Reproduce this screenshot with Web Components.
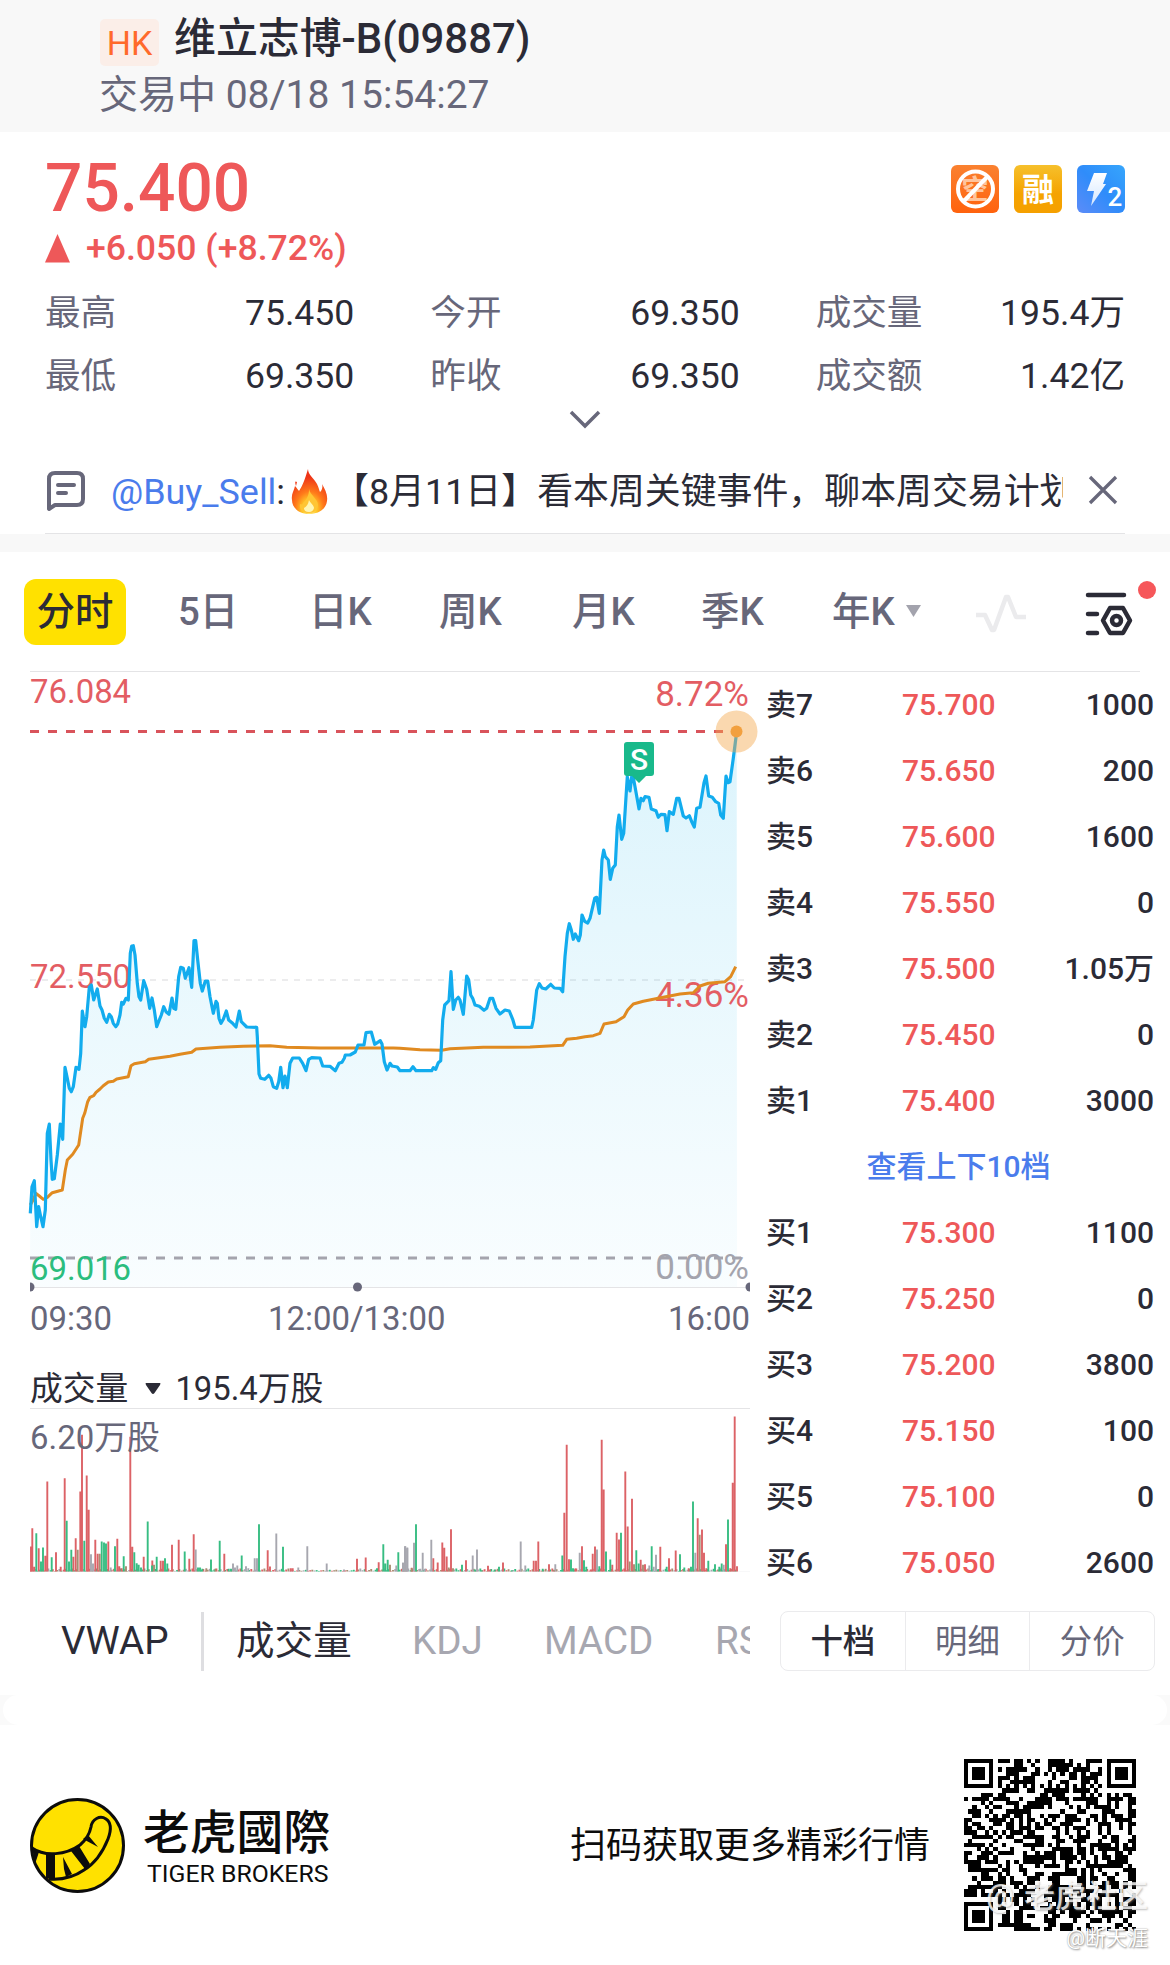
<!DOCTYPE html>
<html lang="zh-CN">
<head>
<meta charset="UTF-8">
<title>维立志博-B(09887)</title>
<style>
    body {
        margin: 0;
        width: 1170px;
        background: #fff;
        color: #2b2b36;
        font-family: Roboto, "Noto Sans CJK SC", sans-serif;
        --red: #ee5859;
        --grey: #67677a;
        --line: #e4e4e6;
        --band: #f8f8f8;
    }
    .market {
        display: flex;
        justify-content: space-between;
        height: 1023px;
        padding: 0 16px 0 30px;
    }
</style>
</head>
<body>
<quote-header market="HK" name="维立志博-B(09887)" status="交易中 08/18 15:54:27"></quote-header>
<price-panel price="75.400" change="+6.050 (+8.72%)">
    <stat-item label="最高">75.450</stat-item>
    <stat-item label="今开">69.350</stat-item>
    <stat-item label="成交量">195.4万</stat-item>
    <stat-item label="最低">69.350</stat-item>
    <stat-item label="昨收">69.350</stat-item>
    <stat-item label="成交额">1.42亿</stat-item>
</price-panel>
<notice-bar user="@Buy_Sell">【8月11日】看本周关键事件，聊本周交易计划</notice-bar>
<period-tabs></period-tabs>
<div class="market">
    <div>
        <price-chart></price-chart>
        <volume-chart total="195.4万股" max="6.20万股"></volume-chart>
        <indicator-tabs></indicator-tabs>
    </div>
    <order-book></order-book>
</div>
<page-notch></page-notch>
<brand-footer>扫码获取更多精彩行情</brand-footer>

<script>
class QuoteHeader extends HTMLElement {
    constructor() {
        super();
        this.attachShadow({ mode: 'open' });
    }
    connectedCallback() {
        this.shadowRoot.innerHTML = `
        <style>
            :host {
                display: block;
                height: 132px;
                box-sizing: border-box;
                padding: 14px 0 0 100px;
                background: var(--band);
            }
            .name {
                display: flex;
                align-items: center;
                gap: 15px;
                height: 50px;
                font-size: 41.9px;
                line-height: 50px;
                font-weight: 500;
            }
            .badge {
                width: 59px;
                height: 47px;
                margin-top: 7px;
                border-radius: 5px;
                background: #fbeee8;
                color: #ff6a2b;
                font-size: 34px;
                line-height: 49px;
                font-weight: 400;
                text-align: center;
            }
            .status {
                margin: 6px 0 0 -1px;
                color: var(--grey);
                font-size: 39px;
                line-height: 50px;
            }
        </style>
        <div class="name"><span class="badge">${this.getAttribute('market')}</span><span>${this.getAttribute('name')}</span></div>
        <div class="status">${this.getAttribute('status')}</div>
        `;
    }
}

class StatItem extends HTMLElement {
    constructor() {
        super();
        this.attachShadow({ mode: 'open' });
    }
    connectedCallback() {
        this.shadowRoot.innerHTML = `
        <style>
            :host {
                display: flex;
                justify-content: space-between;
                font-size: 35.6px;
                line-height: 63px;
            }
            .label { color: var(--grey); }
        </style>
        <span class="label">${this.getAttribute('label')}</span>
        <span><slot></slot></span>
        `;
    }
}

class PricePanel extends HTMLElement {
    constructor() {
        super();
        this.attachShadow({ mode: 'open' });
    }
    connectedCallback() {
        this.shadowRoot.innerHTML = `
        <style>
            :host {
                display: block;
                height: 316px;
                box-sizing: border-box;
                padding: 22px 45px 0;
            }
            .top {
                display: flex;
                justify-content: space-between;
                height: 69px;
            }
            .price {
                color: var(--red);
                font-size: 65.8px;
                line-height: 70px;
                font-weight: 500;
            }
            .tags {
                display: flex;
                gap: 15px;
                padding-top: 11px;
            }
            .change {
                display: flex;
                align-items: center;
                gap: 16px;
                height: 50px;
                color: var(--red);
                font-size: 35.6px;
                font-weight: 500;
            }
            .stats {
                display: grid;
                grid-template-columns: repeat(3, 1fr);
                column-gap: 76px;
                margin-top: 9px;
            }
            .more {
                display: block;
                margin: 0 auto;
            }
        </style>
        <div class="top">
            <div class="price">${this.getAttribute('price')}</div>
            <div class="tags">
                <svg width="48" height="48" viewBox="0 0 48 48">
                    <defs><linearGradient id="o" x1="0" y1="0" x2="0" y2="1"><stop offset="0" stop-color="#fa8130"/><stop offset="1" stop-color="#ff620d"/></linearGradient></defs>
                    <rect width="48" height="48" rx="6" fill="url(#o)"/>
                    <text x="24" y="34" font-size="27" font-weight="700" fill="#ffc49c" text-anchor="middle">空</text>
                    <circle cx="24.5" cy="24" r="17.5" fill="none" stroke="#fff" stroke-width="4"/>
                    <path d="M12.5 36.5 36.5 11.5" stroke="#fff" stroke-width="4"/>
                </svg>
                <svg width="48" height="48" viewBox="0 0 48 48">
                    <defs><linearGradient id="y" x1="0" y1="0" x2="0" y2="1"><stop offset="0" stop-color="#f6c02c"/><stop offset=".6" stop-color="#f5a300"/><stop offset="1" stop-color="#f5a000"/></linearGradient></defs>
                    <rect width="48" height="48" rx="6" fill="url(#y)"/>
                    <text x="24" y="36" font-size="32" font-weight="700" fill="#fff" text-anchor="middle">融</text>
                </svg>
                <svg width="48" height="48" viewBox="0 0 48 48">
                    <defs>
                        <linearGradient id="b" x1="1" y1="0" x2="0" y2="1"><stop offset="0" stop-color="#36a6fc"/><stop offset=".5" stop-color="#2f8cfa"/><stop offset="1" stop-color="#5c8cf8"/></linearGradient>
                        <linearGradient id="f" x1="0" y1="0" x2="0" y2="1"><stop offset="0" stop-color="#fff"/><stop offset="1" stop-color="#d2e6ff"/></linearGradient>
                    </defs>
                    <rect width="48" height="48" rx="6" fill="url(#b)"/>
                    <path d="M17 8H30L26 19H29L14 41 17 26H10Z" fill="url(#f)"/>
                    <text x="38" y="41" font-size="26" font-weight="500" fill="#fff" text-anchor="middle">2</text>
                </svg>
            </div>
        </div>
        <div class="change">
            <svg width="25" height="29"><path d="M12.500 0 25 28.500H0Z" fill="currentColor"/></svg>
            <span>${this.getAttribute('change')}</span>
        </div>
        <div class="stats"><slot></slot></div>
        <svg class="more" width="34" height="22"><path d="M3 4 17 18 31 4" fill="none" stroke="#67677a" stroke-width="3.500"/></svg>
        `;
    }
}

class NoticeBar extends HTMLElement {
    constructor() {
        super();
        this.attachShadow({ mode: 'open' });
    }
    connectedCallback() {
        this.shadowRoot.innerHTML = `
        <style>
            :host {
                display: block;
                height: 104px;
                border-bottom: 18px solid var(--band);
                box-sizing: border-box;
                padding: 0 45px;
            }
            .row {
                display: flex;
                align-items: center;
                height: 85px;
                border-bottom: 1px solid var(--line);
            }
            .text {
                display: flex;
                align-items: center;
                width: 952px;
                margin: 2px 0 0 25px;
                font-size: 35.9px;
                line-height: 60px;
                white-space: nowrap;
                overflow: hidden;
            }
            .user { color: #4a7cec; }
            .fire { flex: none; margin: 0 5px 0 6px; }
            .close { margin: -1px 0 0 25px; }
        </style>
        <div class="row">
            <svg width="41" height="42" viewBox="0 0 41 42" fill="none" stroke="#67677a" stroke-width="4" stroke-linejoin="round" stroke-linecap="round">
                <path d="M4 39V9Q4 3 10 3H32Q38 3 38 9V29Q38 35 32 35H10Z"/>
                <path d="M13 15H29M13 23H21"/>
            </svg>
            <div class="text">
                <span class="user">${this.getAttribute('user')}</span><span>:</span>
                <svg class="fire" width="37" height="45" viewBox="0 0 37 45">
                    <defs><radialGradient id="g" cx=".5" cy=".9" r=".8"><stop offset="0" stop-color="#fff3a0"/><stop offset=".25" stop-color="#ffca28"/><stop offset=".5" stop-color="#ff7a1a"/><stop offset=".9" stop-color="#ee3417"/></radialGradient></defs>
                    <path d="M17 0C17 6 23 9 26 15C28 19 28 21 29 23C31 21 32 18 31 15C34 20 37 26 36 32C35 40 28 45 18 45C7 45 1 38 1 31C0 25 3 22 4 17C6 19 7 21 8 22C12 16 14 10 17 0Z" fill="url(#g)"/>
                    <path d="M6 13Q3 11 5 17Z" fill="#f03a17"/>
                    <path d="M18 20C19 26 27 30 27 36C27 41 23 44 18 44C12 44 8 41 9 35C11 36 12 35 12 34C16 30 18 26 18 20Z" fill="#ffc534"/>
                    <path d="M18 31C19 34 23 36 23 39Q22 43 18 43Q13 43 13 39Q17 37 18 31Z" fill="#fff6b4"/>
                </svg>
                <span><slot></slot></span>
            </div>
            <svg class="close" width="32" height="32"><path d="M2 3 28 29M28 3 2 29" stroke="#67677a" stroke-width="3.300"/></svg>
        </div>
        `;
    }
}

class PeriodTabs extends HTMLElement {
    constructor() {
        super();
        this.attachShadow({ mode: 'open' });
    }
    connectedCallback() {
        this.shadowRoot.innerHTML = `
        <style>
            :host {
                display: block;
                height: 120px;
                box-sizing: border-box;
                padding: 0 30px 0 24px;
            }
            .tabs {
                display: flex;
                align-items: center;
                height: 119px;
                color: var(--grey);
                font-size: 38.4px;
                line-height: 65px;
                font-weight: 500;
                white-space: nowrap;
            }
            .tabs span { flex: none; }
            .active {
                width: 102px;
                height: 66px;
                border-radius: 12px;
                background: #ffe100;
                color: #2b2b36;
                text-align: center;
            }
            .d5 { width: 131px; margin-left: 52px; }
            .k { width: 130px; }
            .w { width: 133px; }
            .m { width: 129px; }
            .q { width: 131px; }
            .y { width: 73px; }
            .pulse { margin: 4px 0 0 52px; }
            .set { position: relative; height: 44px; margin: 5px 0 0 57px; }
            .set svg { display: block; }
            .set i {
                position: absolute;
                left: 53px;
                top: -11px;
                width: 18px;
                height: 18px;
                border-radius: 50%;
                background: #f6575a;
            }
            hr {
                height: 1px;
                margin: 0 0 0 6px;
                border: 0;
                background: var(--line);
            }
        </style>
        <div class="tabs">
            <span class="active">分时</span>
            <span class="d5">5日</span>
            <span class="k">日K</span>
            <span class="w">周K</span>
            <span class="m">月K</span>
            <span class="q">季K</span>
            <span class="y">年K</span>
            <svg width="17" height="13"><path d="M1 0H16L8.500 12Z" fill="#a3a3ad"/></svg>
            <svg class="pulse" width="54" height="42"><path d="M2 22H11L18 37H20L32 4H34L42 24H52" fill="none" stroke="#ebebed" stroke-width="4.500" stroke-linejoin="round"/></svg>
            <div class="set">
                <svg width="48" height="44" viewBox="0 0 48 44" fill="none" stroke="#2b2b36" stroke-width="4.500" stroke-linecap="round" stroke-linejoin="round">
                    <path d="M3 3H39M3 22H12M3 41H12"/>
                    <path d="M25 16H38L45 28.500 38 41H25L18 28.500Z"/>
                    <circle cx="31.500" cy="28.500" r="4.500"/>
                </svg>
                <i></i>
            </div>
        </div>
        <hr>
        `;
    }
}

// prices are traced on a grid of 1/3 px; each part has its own origin
const shift = (list, dx, dy) => list.split(' ').map(p => {
    const [x, y] = p.split(',');
    return [(+x + dx) / 3, (+y + dy) / 3].map(n => n.toFixed(1)).join(' ');
});
const priceLine = [
    ...shift('31,940 36,860 43,842 50,980 56,920 62,950 69,980 76,930 82,700 88,672 93,780 97,838 103,836 112,765 121,672 128,718 135,502 142,535 148,565 154,575 160,560 168,502 177,508 182,460 187,333 195,380 200,350 208,262 214,255 221,300 232,267 240,318 246,330 253,355 260,367 268,343 274,350 280,370 287,380 293,372 300,345 305,307 310,312 318,295 325,300 331,160 335,138 340,137 345,165 352,250 357,290 362,300 371,242 380,268 389,325 396,294 403,330 410,380 418,360 424,345 431,320 438,335 447,343 456,294 461,325 467,328 476,230 482,202 490,205 496,235 507,203 515,262 522,122 527,122 533,180 541,250 547,273 556,243 563,243 570,290 580,340 588,304 592,310 597,355 603,370 610,358 619,333 626,360 636,368 648,381 658,333 664,365 680,381 710,382 712,410 717,522 722,535 734,538 746,526 753,535 760,560 770,565 776,545 782,502 789,563 795,528 802,563 810,490 818,474 838,474 848,490 858,512 866,478 875,473 900,474 908,498 930,499 946,512 957,490 966,487 973,475 976,465 990,465 1006,456 1014,435 1032,435 1038,398 1054,396 1064,433 1081,422 1086,432 1093,485 1101,510 1110,490 1116,498 1132,501', -30, 684),
    ...shift('0,1172 30,1172 39,1160 48,1172 95,1172 100,1163 107,1168 115,1148 122,1142 128,1020 134,975 147,962 153,875 160,988 167,960 175,952 180,960 190,1003 200,888 206,900 212,945 218,955 225,975 238,979 252,991 260,985 270,955 278,955 288,985 300,1002 315,990 328,993 338,1018 345,1042 395,1042 400,1020 410,930 418,911 426,924 437,927 452,913 463,924 480,925 488,935 495,830 502,760 508,731 514,750 520,778 526,762 536,782 541,765 546,705 554,724 563,729 570,715 584,655 590,652 598,700 606,540 611,510 616,530 625,540 631,598 638,565 646,555 652,440 657,405 665,478 671,460 682,290 690,333 697,275 704,315 717,387 723,355 730,362 735,350 747,352 754,387 768,392 775,412 783,403 795,404 801,452 808,395 820,403 830,355 837,355 850,408 858,414 868,407 875,425 883,441 890,385 900,382 912,308 918,288 926,348 937,352 947,365 956,370 962,405 970,415 978,288 984,308 990,305 1000,235 1010,155', 1110, 24)
].join('L');
const averageLine = [
    ...shift('31,915 39,900 48,880 58,888 70,898 82,892 97,878 127,870 136,810 142,780 158,763 176,735 188,655 194,640 203,605 210,592 221,587 228,577 240,567 250,557 265,546 280,544 290,537 325,530 333,497 343,491 376,485 386,478 450,469 480,463 515,457 528,447 600,442 670,439 750,437 800,442 900,444 1120,444', -30, 684),
    ...shift('0,1105 60,1109 125,1111 150,1106 250,1102 390,1101 488,1096 500,1078 530,1075 555,1070 580,1067 600,1060 612,1032 648,1025 672,1010 683,990 700,972 730,964 760,958 790,952 840,942 880,938 900,918 925,910 975,905 992,890 1007,860', 1110, 24)
].join('L');

class PriceChart extends HTMLElement {
    constructor() {
        super();
        this.attachShadow({ mode: 'open' });
    }
    connectedCallback() {
        this.shadowRoot.innerHTML = `
        <style>
            :host {
                display: block;
                width: 720px;
                height: 688px;
            }
            svg { display: block; overflow: visible; }
            text { font-size: 32.9px; fill: #e35d63; }
            .pct { font-size: 35px; text-anchor: end; }
            .times {
                display: grid;
                grid-template-columns: 238px 1fr auto;
                margin-top: 2px;
                color: var(--grey);
                font-size: 32.9px;
                line-height: 46px;
            }
        </style>
        <svg width="720" height="622">
            <defs>
                <linearGradient id="area" gradientUnits="userSpaceOnUse" x1="0" y1="60" x2="0" y2="615">
                    <stop offset="0" stop-color="#12b4ec" stop-opacity=".15"/>
                    <stop offset="1" stop-color="#12b4ec" stop-opacity=".025"/>
                </linearGradient>
            </defs>
            <path d="M0 615.500H720" stroke="#e4e4e6"/>
            <path d="M0 308H720" stroke="#e6e6e8" stroke-width="1.500" stroke-dasharray="6 6"/>
            <path d="M${priceLine}L707 615H0Z" fill="url(#area)"/>
            <path d="M0 59.500H700" stroke="#d9535b" stroke-width="3" stroke-dasharray="9 9"/>
            <path d="M0 586H720" stroke="#a4a4ad" stroke-width="3" stroke-dasharray="9 9"/>
            <text x="0" y="31">76.084</text>
            <text x="0" y="316">72.550</text>
            <text x="0" y="608" style="fill:#2bbd7e">69.016</text>
            <text class="pct" x="719" y="33.500">8.72%</text>
            <text class="pct" x="719" y="335">4.36%</text>
            <text class="pct" x="719" y="607" style="fill:#a4a4ad">0.00%</text>
            <path d="M${averageLine}" fill="none" stroke="#e08a20" stroke-width="3" stroke-linejoin="round"/>
            <path d="M${priceLine}" fill="none" stroke="#12acee" stroke-width="3.200" stroke-linejoin="round"/>
            <circle cx="706.500" cy="59.500" r="21" fill="#f5a94e" fill-opacity=".45"/>
            <circle cx="706.500" cy="59.500" r="6" fill="#f2a03f"/>
            <path d="M597 70H621Q624 70 624 73V101Q624 104 621 104H616L609 111 602 104H597Q594 104 594 101V73Q594 70 597 70Z" fill="#19b98b"/>
            <text x="609" y="98" text-anchor="middle" style="fill:#fff;font-size:30px;font-weight:500">S</text>
            <path d="M0 610.500A4.500 4.500 0 0 1 0 619.500Z" fill="#67677a"/>
            <circle cx="327.500" cy="615" r="4.500" fill="#67677a"/>
            <path d="M720 610.500A4.500 4.500 0 0 0 720 619.500Z" fill="#67677a"/>
        </svg>
        <div class="times"><span>09:30</span><span>12:00/13:00</span><span>16:00</span></div>
        `;
    }
}

// x,height pairs in 1/3 px, one list for each half of the session
const volumes = {
    '#dc6266': [
        '3,75 7,130 13,14 26,70 46,47 52,270 78,58 92,14 104,280 130,44 137,100 151,240 156,410 170,288 176,185 196,95 203,53 235,90 262,98 268,16 275,10 301,404 307,74 341,44 367,33 392,32 399,32 426,80 446,95 478,38 491,112 583,53 713,64 720,15 782,10 788,10 981,38 1007,42 1046,28',
        '35,11 100,40 113,27 127,87 133,71 140,45 153,127 198,34 264,17 270,6 309,27 401,32 408,32 415,90 447,22 493,176 500,380 507,37 526,9 546,76 572,6 578,53 585,75 605,395 611,246 637,20 650,116 657,96 676,300 683,135 696,218 722,35 735,22 781,74 807,40 827,63 866,10 893,160 906,126 912,56 919,10 978,82 991,10 998,266 1004,465 1011,16'
    ],
    '#37bd82': [
        '19,115 33,30 39,72 65,43 110,152 117,30 124,65 163,92 215,90 222,87 228,84 255,76 281,46 313,58 320,25 326,20 333,12 353,150 366,18 380,44 405,40 412,24 464,60 504,12 510,12 517,8 543,36 569,92 596,8 603,8 635,48 687,142 759,74 1041,10 1060,82 1066,24 1073,35 1105,58 1158,142',
        '186,20 225,6 245,4 284,6 297,14 335,4 428,8 487,48 513,36 519,10 552,34 559,14 598,16 618,60 631,36 663,116 709,64 716,24 755,76 774,7 800,14 840,52 853,12 873,14 879,210 925,32 945,22 958,14 965,24 984,156'
    ],
    '#a7a7af': [
        '183,52 189,24 242,12 497,66 609,24 615,12 622,18 648,16 655,10 674,40 681,40 739,114 832,76 805,12 890,24 942,6 1099,18 1119,26 1125,76 1132,72 1152,86',
        '9,26 16,76 22,70 68,56 61,8 75,8 94,95 218,48 231,66 362,90 376,18 466,22 539,56 591,66 748,18 761,14 768,50 886,56 971,20'
    ],
    '#a88d72': [
        '143,65 209,53 288,16 372,20 529,10 556,8 1080,20 1145,10',
        '146,12 159,10 461,5 689,30 729,20 899,110 702,22'
    ]
};

class VolumeChart extends HTMLElement {
    constructor() {
        super();
        this.attachShadow({ mode: 'open' });
    }
    bars() {
        const colors = Object.keys(volumes);
        let out = '';
        // quiet minutes along the base line
        for (let i = 0; i < 324; i++) {
            const low = i > 118 && i < 150 ? 0.5 : 1;
            const h = 0.6 + ((i * 37) % 11) / 11 * 2.6 * low;
            out += `<path d="M${(1 + i * 2.181).toFixed(1)} 155v-${h.toFixed(1)}" stroke="${colors[(i * 7 + (i >> 2)) % 4]}"/>`;
        }
        colors.forEach(color => {
            volumes[color].forEach((half, n) => {
                const d = half.split(' ').map(p => {
                    const [x, h] = p.split(',');
                    return `M${((+x + n * 1110) / 3).toFixed(1)} 155v-${(h / 3).toFixed(1)}`;
                }).join('');
                out += `<path d="${d}" stroke="${color}"/>`;
            });
        });
        return out;
    }
    connectedCallback() {
        this.shadowRoot.innerHTML = `
        <style>
            :host { display: block; width: 720px; height: 211px; }
            .title {
                display: flex;
                align-items: center;
                height: 38px;
                padding-top: 10px;
                border-bottom: 1px solid var(--line);
                font-size: 32.8px;
                line-height: 38px;
            }
            .title svg { margin: 0 14px 0 17px; }
            svg { display: block; }
            text { font-size: 32.9px; fill: #67677a; }
        </style>
        <div class="title">
            <span>成交量</span>
            <svg width="16" height="12"><path d="M1 0H15Q16 0 15 2L9.500 10Q8 12 6.500 10L1 2Q0 0 1 0Z" fill="#2b2b36"/></svg>
            <span>${this.getAttribute('total')}</span>
        </div>
        <svg width="720" height="163">
            <g transform="translate(0 7.500)" stroke-width="1.900"><path d="M0 155.500H720" stroke="#f1f1f2" stroke-width="1"/>${this.bars()}</g>
            <text x="0" y="40">${this.getAttribute('max')}</text>
        </svg>
        `;
    }
}

class IndicatorTabs extends HTMLElement {
    constructor() {
        super();
        this.attachShadow({ mode: 'open' });
    }
    connectedCallback() {
        this.shadowRoot.innerHTML = `
        <style>
            :host {
                display: flex;
                align-items: center;
                width: 720px;
                height: 60px;
                margin-top: 40px;
                overflow: hidden;
                color: #a7a7b0;
                font-size: 38.6px;
                line-height: 60px;
                white-space: nowrap;
            }
            span { flex: none; }
            .on { color: #2b2b36; }
            .main { width: 140px; padding-left: 31px; }
            .sub { width: 176px; padding-left: 32px; }
            .bar { flex: none; width: 3px; height: 59px; background: #dedee1; }
            .kdj { width: 132px; }
            .macd { width: 171px; }
        </style>
        <span class="on main">VWAP</span><i class="bar"></i><span class="on sub">成交量</span>
        <span class="kdj">KDJ</span><span class="macd">MACD</span><span>RSI</span>
        `;
    }
}

class OrderRow extends HTMLElement {
    constructor() {
        super();
        this.attachShadow({ mode: 'open' });
    }
    connectedCallback() {
        this.shadowRoot.innerHTML = `
        <style>
            :host {
                display: grid;
                grid-template-columns: 136px 96px 1fr;
                height: 66px;
                font-size: 30px;
                line-height: 66px;
                font-weight: 500;
            }
            .price { color: var(--red); }
            .size { text-align: right; }
        </style>
        <span>${this.getAttribute('side')}</span>
        <span class="price">${this.getAttribute('price')}</span>
        <span class="size">${this.getAttribute('size')}</span>
        `;
    }
}

class OrderBook extends HTMLElement {
    constructor() {
        super();
        this.attachShadow({ mode: 'open' });
    }
    connectedCallback() {
        const asks = [['卖7', '75.700', '1000'], ['卖6', '75.650', '200'], ['卖5', '75.600', '1600'], ['卖4', '75.550', '0'], ['卖3', '75.500', '1.05万'], ['卖2', '75.450', '0'], ['卖1', '75.400', '3000']];
        const bids = [['买1', '75.300', '1100'], ['买2', '75.250', '0'], ['买3', '75.200', '3800'], ['买4', '75.150', '100'], ['买5', '75.100', '0'], ['买6', '75.050', '2600']];
        const rows = list => list.map(r => `<order-row side="${r[0]}" price="${r[1]}" size="${r[2]}"></order-row>`).join('');
        this.shadowRoot.innerHTML = `
        <style>
            :host { display: block; width: 388px; }
            .more {
                height: 66px;
                padding-right: 3px;
                color: #4a7cec;
                font-size: 30px;
                line-height: 66px;
                font-weight: 500;
                text-align: center;
            }
            .switch {
                display: flex;
                width: 375px;
                height: 60px;
                box-sizing: border-box;
                margin: 15px 0 0 14px;
                border: 1px solid #ebebed;
                border-radius: 8px;
                color: var(--grey);
                font-size: 32.4px;
                line-height: 60px;
                text-align: center;
            }
            .list { height: 924px; }
            .switch span { flex: 1; }
            .switch span + span { border-left: 1px solid #ebebed; }
            .switch .on { color: #2b2b36; font-weight: 500; }
        </style>
        <div class="list">${rows(asks)}<div class="more">查看上下10档</div>${rows(bids)}</div>
        <div class="switch"><span class="on">十档</span><span>明细</span><span>分价</span></div>
        `;
    }
}

class PageNotch extends HTMLElement {
    constructor() {
        super();
        this.attachShadow({ mode: 'open' });
    }
    connectedCallback() {
        this.shadowRoot.innerHTML = `
        <style>
            :host { display: block; height: 30px; padding: 0 3px; background: #fafafa; }
            div { height: 30px; border-radius: 15px; background: #fff; }
        </style>
        <div></div>
        `;
    }
}

class QrCode extends HTMLElement {
    constructor() {
        super();
        this.attachShadow({ mode: 'open' });
    }
    ring(x, y, cx, cy) {
        return Math.max(Math.abs(x - cx), Math.abs(y - cy));
    }
    connectedCallback() {
        const n = 41;
        let seed = 9887;
        let d = '';
        for (let y = 0; y < n; y++) {
            for (let x = 0; x < n; x++) {
                seed = (seed * 1103515245 + 12345) % 2147483648;
                let on = seed / 2147483648 < 0.54;
                if (x === 6 || y === 6) on = (x + y) % 2 === 0;
                [[3, 3], [37, 3], [3, 37]].forEach(([cx, cy]) => {
                    const r = this.ring(x, y, cx, cy);
                    if (r <= 4) on = r !== 4 && r !== 2;
                });
                const a = this.ring(x, y, 34, 34);
                if (a <= 2) on = a !== 1;
                if (on) d += `M${x} ${y}h1v1h-1z`;
            }
        }
        this.shadowRoot.innerHTML = `
        <style>
            :host { display: block; width: 172px; height: 172px; }
            svg { display: block; }
        </style>
        <svg width="172" height="172" viewBox="0 0 41 41" shape-rendering="crispEdges"><path d="${d}"/></svg>
        `;
    }
}

class BrandFooter extends HTMLElement {
    constructor() {
        super();
        this.attachShadow({ mode: 'open' });
    }
    connectedCallback() {
        this.shadowRoot.innerHTML = `
        <style>
            :host {
                position: relative;
                display: flex;
                align-items: center;
                height: 240px;
                box-sizing: border-box;
                padding: 0 34px 0 29px;
                color: #0c0c0c;
            }
            .brand { width: 190px; margin-left: 17px; }
            .cn {
                font: 500 46.8px/52px "Noto Sans CJK TC", sans-serif;
                white-space: nowrap;
            }
            .en {
                padding-left: 4px;
                margin-top: 5px;
                font-size: 24.8px;
                line-height: 28px;
                white-space: nowrap;
            }
            .tip {
                flex: 1;
                margin: -6px 34px 0 0;
                font-size: 36px;
                text-align: right;
            }
            .mark {
                position: absolute;
                right: 22px;
                white-space: nowrap;
                color: #fff;
                text-shadow: 1px 1px 2px #888, 0 0 1px #aaa;
            }
            .m1 {
                top: 153px;
                display: flex;
                gap: 10px;
                color: #ffffffcc;
                font-size: 31px;
                line-height: 38px;
                font-weight: 500;
                text-shadow: 1px 1px 2px #8888;
            }
            .m2 { top: 197px; font-size: 21px; line-height: 32px; }
        </style>
        <svg width="97" height="97" viewBox="0 0 97 97">
            <circle cx="48.500" cy="48.500" r="46" fill="#ffe100" stroke="#0c0c0c" stroke-width="3"/>
            <path d="M3 51C16 60 37 58 51 48C58 42 61 35 62 30C63 22 71 18 77 22C83 26 82 34 79 42C73 57 65 67 55 73C45 80 33 83 20 82" fill="none" stroke="#0c0c0c" stroke-width="3"/>
            <path d="M3 50 10 55 6 67ZM17 57 26 58 26 81 17 82ZM34 60 43 77 37 80 35 72ZM42 54 50 49 61 67 56 72ZM54 42 59 38 69 50Z" fill="#0c0c0c"/>
        </svg>
        <div class="brand">
            <div class="cn">老虎國際</div>
            <div class="en">TIGER BROKERS</div>
        </div>
        <div class="tip"><slot></slot></div>
        <qr-code></qr-code>
        <div class="mark m1"><span>@</span><span>老虎社区</span></div>
        <div class="mark m2">@断天涯</div>
        `;
    }
}

window.customElements.define('quote-header', QuoteHeader);
window.customElements.define('stat-item', StatItem);
window.customElements.define('price-panel', PricePanel);
window.customElements.define('notice-bar', NoticeBar);
window.customElements.define('period-tabs', PeriodTabs);
window.customElements.define('price-chart', PriceChart);
window.customElements.define('volume-chart', VolumeChart);
window.customElements.define('indicator-tabs', IndicatorTabs);
window.customElements.define('order-row', OrderRow);
window.customElements.define('order-book', OrderBook);
window.customElements.define('page-notch', PageNotch);
window.customElements.define('qr-code', QrCode);
window.customElements.define('brand-footer', BrandFooter);
</script>
</body>
</html>
